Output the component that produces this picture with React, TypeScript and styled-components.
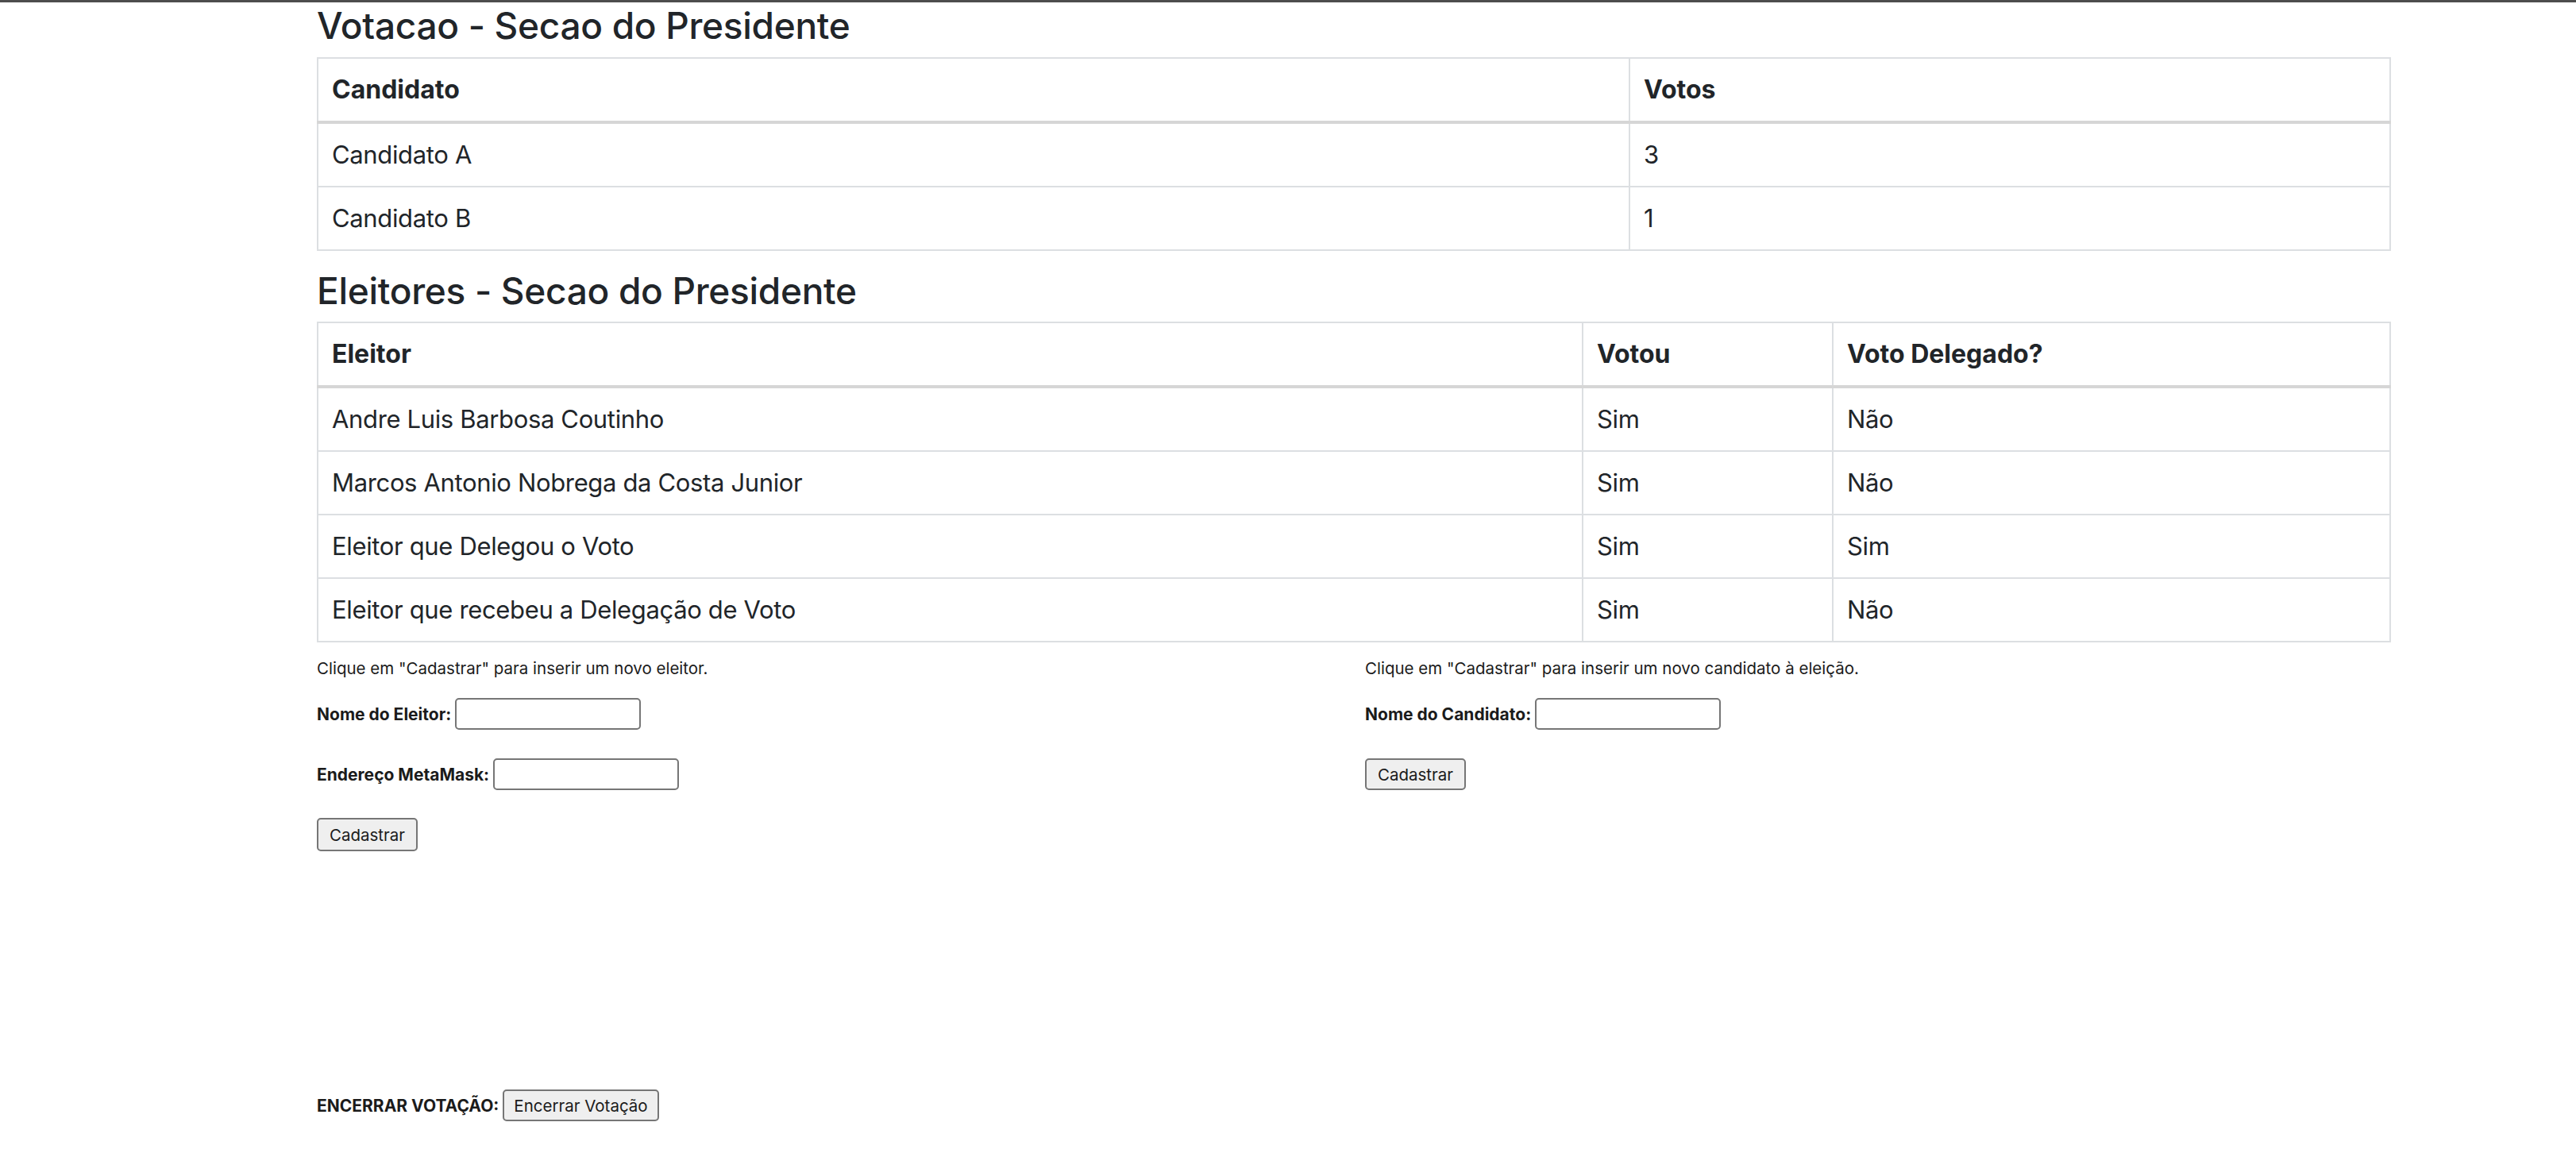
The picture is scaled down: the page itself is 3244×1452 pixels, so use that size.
import React from 'react';
import styled, { createGlobalStyle } from 'styled-components';

const GlobalStyle = createGlobalStyle`
  html, body {
    margin: 0;
    padding: 0;
    background: #ffffff;
  }
  body {
    font-family: Inter, "Noto Sans", "Liberation Sans", sans-serif;
    color: #212529;
  }
`

const Page = styled.div`
  border-top: 3px solid #4d4d4d;
  min-height: 1449px;
`

const Content = styled.div`
  margin-left: 399px;
  width: 2610px;
  padding-top: 5px;
`

const Title = styled.h2`
  margin: ${(props: any) => props.$top || '0'} 0 ${(props: any) => props.$bottom || '16px'} 0;
  font-size: 46px;
  line-height: 48px;
  font-weight: 500;
  color: #212529;
  letter-spacing: -0.3px;
`

const Table = styled.table`
  width: 2610px;
  table-layout: fixed;
  border-collapse: collapse;
  margin-bottom: 0;
  font-size: 32px;
  line-height: 48px;
  color: #212529;

  th, td {
    border: 2px solid #dcdfe2;
    padding: 15px 16px 15px 17px;
    text-align: left;
    vertical-align: top;
  }

  td {
    font-size: 31px;
    letter-spacing: -0.35px;
  }

  th {
    font-weight: 700;
    border-bottom-width: 4px;
    border-bottom-color: #d6d6d6;
  }
`

const Col = styled.col`
  width: ${(props: any) => props.$width};
`

const Forms = styled.div`
  display: flex;
  margin-top: 21px;
  font-size: 20.5px;
  color: #1b1b1b;
`

const FormColumn = styled.div`
  display: flex;
  flex-direction: column;
  gap: 36px;
  width: ${(props: any) => props.$width};
`

const Hint = styled.p`
  margin: 0 0 -11px 0;
  line-height: 24px;
`

const FieldRow = styled.div`
  display: flex;
  align-items: center;
  height: 40px;
  gap: 5px;
`

const Label = styled.label`
  font-weight: 700;
  font-size: 21px;
  white-space: nowrap;
`

const TextInput = styled.input`
  box-sizing: border-box;
  width: 234px;
  height: 40px;
  border: 2px solid #767676;
  border-radius: 5px;
  background: #ffffff;
  padding: 2px 6px;
  font-size: 20px;
  font-family: inherit;
`

const Button = styled.button`
  box-sizing: border-box;
  height: ${(props: any) => props.$height || '40px'};
  padding: 0 ${(props: any) => props.$pad || '14px'};
  border: 2px solid #767676;
  border-radius: 5px;
  background: #efefef;
  color: #1b1b1b;
  font-size: 20.5px;
  font-family: inherit;
  cursor: pointer;
`

const CloseRow = styled.div`
  display: flex;
  align-items: center;
  gap: 5px;
  margin-top: 301px;
  font-size: 20.5px;
  color: #1b1b1b;
`

const CloseLabel = styled.span`
  font-weight: 700;
  font-size: 21px;
`

const candidatos = [
  { nome: 'Candidato A', votos: 3 },
  { nome: 'Candidato B', votos: 1 },
];

const eleitores = [
  { nome: 'Andre Luis Barbosa Coutinho', votou: 'Sim', delegado: 'Não' },
  { nome: 'Marcos Antonio Nobrega da Costa Junior', votou: 'Sim', delegado: 'Não' },
  { nome: 'Eleitor que Delegou o Voto', votou: 'Sim', delegado: 'Sim' },
  { nome: 'Eleitor que recebeu a Delegação de Voto', votou: 'Sim', delegado: 'Não' },
];

const App = () => {
  return (
    <Page>
      <GlobalStyle />
      <Content>
        <Title>Votacao - Secao do Presidente</Title>
        <Table>
          <colgroup>
            <Col $width="1652px" />
            <Col $width="958px" />
          </colgroup>
          <thead>
            <tr>
              <th>Candidato</th>
              <th>Votos</th>
            </tr>
          </thead>
          <tbody>
            {candidatos.map((c) => (
              <tr key={c.nome}>
                <td>{c.nome}</td>
                <td>{c.votos}</td>
              </tr>
            ))}
          </tbody>
        </Table>

        <Title $top="26px" $bottom="15px">Eleitores - Secao do Presidente</Title>
        <Table>
          <colgroup>
            <Col $width="1593px" />
            <Col $width="315px" />
            <Col $width="702px" />
          </colgroup>
          <thead>
            <tr>
              <th>Eleitor</th>
              <th>Votou</th>
              <th>Voto Delegado?</th>
            </tr>
          </thead>
          <tbody>
            {eleitores.map((e) => (
              <tr key={e.nome}>
                <td>{e.nome}</td>
                <td>{e.votou}</td>
                <td>{e.delegado}</td>
              </tr>
            ))}
          </tbody>
        </Table>

        <Forms>
          <FormColumn $width="1320px">
            <Hint>Clique em "Cadastrar" para inserir um novo eleitor.</Hint>
            <FieldRow>
              <Label>Nome do Eleitor:</Label>
              <TextInput type="text" />
            </FieldRow>
            <FieldRow>
              <Label>Endereço MetaMask:</Label>
              <TextInput type="text" />
            </FieldRow>
            <FieldRow>
              <Button $height="42px">Cadastrar</Button>
            </FieldRow>
          </FormColumn>
          <FormColumn $width="1000px">
            <Hint>Clique em "Cadastrar" para inserir um novo candidato à eleição.</Hint>
            <FieldRow>
              <Label>Nome do Candidato:</Label>
              <TextInput type="text" />
            </FieldRow>
            <FieldRow>
              <Button>Cadastrar</Button>
            </FieldRow>
          </FormColumn>
        </Forms>

        <CloseRow>
          <CloseLabel>ENCERRAR VOTAÇÃO:</CloseLabel>
          <Button $pad="12px">Encerrar Votação</Button>
        </CloseRow>
      </Content>
    </Page>
  );
};

export default App;
